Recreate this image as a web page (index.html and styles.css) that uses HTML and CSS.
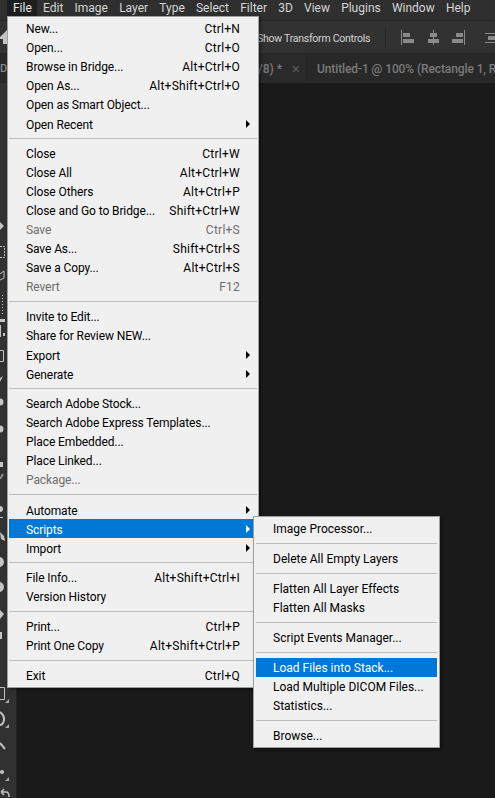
FILE: index.html
```html
<!DOCTYPE html>
<html lang="en">
<head>
    <meta charset="UTF-8">
    <meta name="viewport" content="width=device-width, initial-scale=1.0">
    <title>File menu</title>
    <link rel="stylesheet" href="styles.css">
</head>
<body>
    <div class="app">
        <div class="menubar">
            <span class="top-item top-active">File</span>
            <span class="top-item">Edit</span>
            <span class="top-item">Image</span>
            <span class="top-item">Layer</span>
            <span class="top-item">Type</span>
            <span class="top-item">Select</span>
            <span class="top-item">Filter</span>
            <span class="top-item">3D</span>
            <span class="top-item">View</span>
            <span class="top-item">Plugins</span>
            <span class="top-item">Window</span>
            <span class="top-item">Help</span>
        </div>
        <div class="optionsbar">
            <svg class="home-icon" width="8" height="16" viewBox="0 0 8 16">
                <path d="M0 8L7 1V15H3V10H0Z" fill="#c4c4c4"/>
            </svg>
            <span class="transform-label">Show Transform Controls</span>
            <span class="bar-divider"></span>
            <svg class="align-icons" width="94" height="15" viewBox="0 0 94 15">
                <g fill="#8a8a8a">
                    <rect x="0" y="0" width="1" height="15"/>
                    <rect x="2" y="3" width="7" height="4"/>
                    <rect x="2" y="9" width="11" height="4"/>
                    <rect x="32" y="0" width="1" height="15"/>
                    <rect x="29" y="3" width="7" height="4"/>
                    <rect x="27" y="9" width="11" height="4"/>
                    <rect x="63" y="0" width="1" height="15"/>
                    <rect x="55" y="3" width="7" height="4"/>
                    <rect x="51" y="9" width="11" height="4"/>
                    <rect x="84" y="3" width="10" height="1"/>
                    <rect x="84" y="12" width="10" height="1"/>
                    <rect x="87" y="6" width="7" height="4"/>
                </g>
            </svg>
        </div>
        <div class="tabbar">
            <span class="tab-stub">D</span>
            <span class="tab-first">/8) * <span class="tab-close">×</span></span>
            <span class="tab-second">Untitled-1 @ 100% (Rectangle 1, R</span>
        </div>
        <div class="workspace">
            <div class="toolbar">
                <svg width="16" height="714" viewBox="0 84 16 714">
                    <g fill="#c4c4c4">
                        <path d="M0 223L4 227L0 231Z"/>
                        <path d="M0 320H5V323H0Z"/>
                        <path d="M0 326H1V338H0ZM3 334H5V337H3Z"/>
                        <path d="M3 377L0 383L0 379Z"/>
                        <circle cx="0" cy="403" r="3.500"/>
                        <circle cx="0" cy="430" r="3.500"/>
                        <path d="M0 463H3V468H0Z"/>
                        <circle cx="0" cy="510" r="3"/>
                        <path d="M0 518H3V519H0Z"/>
                        <path d="M0 533L4 537L5 542L1 540Z"/>
                        <circle cx="-1" cy="563" r="5"/>
                        <circle cx="-1" cy="588" r="5"/>
                        <path d="M0 611L4 615L0 620Z"/>
                        <path d="M0 633H2V640H0Z"/>
                        <circle cx="2" cy="773" r="2"/>
                    </g>
                    <g fill="none" stroke="#c0c0c0">
                        <path d="M0 247.500H4.500V258.500H0" stroke-dasharray="2 1"/>
                        <path d="M0 281L4 279V272L0 275"/>
                        <path d="M2.500 296V317" stroke-dasharray="1 2"/>
                        <path d="M0 351.500H3.500V362.500H0"/>
                        <path d="M0 480L3 475" stroke="#8a8a8a" stroke-width="2"/>
                        <path d="M0 688.500H4.500V700.500H0"/>
                        <path d="M0 713C4 716 5 720 3 724C2 726 1 726 0 726" stroke-width="2"/>
                        <path d="M0 744L5 750" stroke-width="2"/>
                        <path d="M1 793L4 790M1 793L4 796M1 793H6C8 793 9 795 9 798" stroke-width="1.500"/>
                    </g>
                    <g fill="#a8a8a8">
                        <path d="M9 700V704H5Z"/>
                        <path d="M9 725V729H5Z"/>
                        <path d="M9 778V782H5Z"/>
                    </g>
                </svg>
            </div>
            <div class="canvas"></div>
        </div>

        <div class="menu file-menu">
            <div class="item"><span>New...</span><span class="keys">Ctrl+N</span></div>
            <div class="item"><span>Open...</span><span class="keys">Ctrl+O</span></div>
            <div class="item"><span>Browse in Bridge...</span><span class="keys">Alt+Ctrl+O</span></div>
            <div class="item"><span>Open As...</span><span class="keys">Alt+Shift+Ctrl+O</span></div>
            <div class="item"><span>Open as Smart Object...</span></div>
            <div class="item sub"><span>Open Recent</span></div>
            <div class="sep"></div>
            <div class="item"><span>Close</span><span class="keys">Ctrl+W</span></div>
            <div class="item"><span>Close All</span><span class="keys">Alt+Ctrl+W</span></div>
            <div class="item"><span>Close Others</span><span class="keys">Alt+Ctrl+P</span></div>
            <div class="item"><span>Close and Go to Bridge...</span><span class="keys">Shift+Ctrl+W</span></div>
            <div class="item off"><span>Save</span><span class="keys">Ctrl+S</span></div>
            <div class="item"><span>Save As...</span><span class="keys">Shift+Ctrl+S</span></div>
            <div class="item"><span>Save a Copy...</span><span class="keys">Alt+Ctrl+S</span></div>
            <div class="item off"><span>Revert</span><span class="keys">F12</span></div>
            <div class="sep"></div>
            <div class="item"><span>Invite to Edit...</span></div>
            <div class="item"><span>Share for Review NEW...</span></div>
            <div class="item sub"><span>Export</span></div>
            <div class="item sub"><span>Generate</span></div>
            <div class="sep"></div>
            <div class="item"><span>Search Adobe Stock...</span></div>
            <div class="item"><span>Search Adobe Express Templates...</span></div>
            <div class="item"><span>Place Embedded...</span></div>
            <div class="item"><span>Place Linked...</span></div>
            <div class="item off"><span>Package...</span></div>
            <div class="sep"></div>
            <div class="item sub"><span>Automate</span></div>
            <div class="item sub selected"><span>Scripts</span></div>
            <div class="item sub"><span>Import</span></div>
            <div class="sep"></div>
            <div class="item"><span>File Info...</span><span class="keys">Alt+Shift+Ctrl+I</span></div>
            <div class="item"><span>Version History</span></div>
            <div class="sep"></div>
            <div class="item"><span>Print...</span><span class="keys">Ctrl+P</span></div>
            <div class="item"><span>Print One Copy</span><span class="keys">Alt+Shift+Ctrl+P</span></div>
            <div class="sep"></div>
            <div class="item"><span>Exit</span><span class="keys">Ctrl+Q</span></div>
        </div>

        <div class="menu scripts-menu">
            <div class="item"><span>Image Processor...</span></div>
            <div class="sep"></div>
            <div class="item"><span>Delete All Empty Layers</span></div>
            <div class="sep"></div>
            <div class="item"><span>Flatten All Layer Effects</span></div>
            <div class="item"><span>Flatten All Masks</span></div>
            <div class="sep"></div>
            <div class="item"><span>Script Events Manager...</span></div>
            <div class="sep"></div>
            <div class="item selected"><span>Load Files into Stack...</span></div>
            <div class="item"><span>Load Multiple DICOM Files...</span></div>
            <div class="item"><span>Statistics...</span></div>
            <div class="sep"></div>
            <div class="item"><span>Browse...</span></div>
        </div>
    </div>
</body>
</html>
```
FILE: styles.css
```css
* {
    box-sizing: border-box;
}
html, body {
    margin: 0;
    height: 100%;
}
body {
    font-family: 'Roboto', 'Noto Sans', sans-serif;
    font-size: 12px;
    background-color: #1a1a1a;
    overflow: hidden;
}
.app {
    position: relative;
    display: flex;
    flex-direction: column;
    width: 495px;
    height: 798px;
    overflow: hidden;
}
.menubar {
    display: flex;
    height: 20px;
    padding: 0 0 3px 7.4px;
    background-color: #2f2f2f;
    color: #d6d6d6;
    flex-shrink: 0;
}
.top-item {
    padding: 0 5.6px;
    line-height: 17px;
    white-space: nowrap;
}
.top-active {
    background-color: #1e1e1e;
    color: #e8e8e8;
}
.optionsbar {
    display: flex;
    height: 34px;
    align-items: center;
    background-color: #323232;
    border-top: 1px solid #262626;
    border-bottom: 1px solid #262626;
    flex-shrink: 0;
    overflow: hidden;
}
.home-icon {
    flex-shrink: 0;
    margin-right: 249px;
}
.transform-label {
    margin-top: 2px;
    font-size: 10.5px;
    letter-spacing: -0.25px;
    color: #d4d4d4;
    white-space: nowrap;
    width: 128px;
    flex-shrink: 0;
}
.bar-divider {
    width: 1px;
    height: 22px;
    background-color: #282828;
    margin-right: 15px;
    flex-shrink: 0;
}
.align-icons {
    margin-top: 1px;
    flex-shrink: 0;
}
.tabbar {
    display: flex;
    height: 29px;
    align-items: center;
    background-color: #282828;
    color: #7a7a7a;
    font-weight: 500;
    white-space: nowrap;
    flex-shrink: 0;
    overflow: hidden;
}
.tab-stub {
    width: 8px;
    flex-shrink: 0;
    color: #8a8a8a;
    font-size: 11px;
}
.tab-first {
    width: 299px;
    height: 100%;
    padding-left: 250px;
    line-height: 29px;
    background-color: #2a2a2a;
    border-right: 1px solid #252525;
    flex-shrink: 0;
}
.tab-close {
    font-weight: 300;
    font-size: 15px;
    margin-left: 7px;
    color: #6c6c6c;
}
.tab-second {
    padding-left: 10px;
    letter-spacing: -0.1px;
}
.workspace {
    display: flex;
    flex: 1;
    min-height: 0;
}
.toolbar {
    width: 17px;
    background-color: #313131;
    border-right: 1px solid #232323;
    overflow: hidden;
}
.toolbar svg {
    display: block;
}
.canvas {
    flex: 1;
    background-color: #1a1a1a;
}

.menu {
    position: absolute;
    padding: 2px 1px;
    background-color: #f0f0f0;
    border: 1px solid #a0a0a0;
    box-shadow: 2px 2px 3px rgba(0, 0, 0, 0.4);
    color: #000;
}
.file-menu {
    left: 7px;
    top: 16px;
    width: 252px;
    height: 672px;
    letter-spacing: -0.1px;
}
.scripts-menu {
    left: 253px;
    top: 516px;
    width: 187px;
    height: 232px;
    padding: 2px;
}
.item {
    position: relative;
    display: flex;
    justify-content: space-between;
    height: 19px;
    padding: 0 17px;
    line-height: 21px;
    white-space: nowrap;
}
.item.sub {
    padding-top: 1px;
}
.keys {
    letter-spacing: 0.25px;
}
.item.off {
    color: #6d6d6d;
}
.item.selected {
    background-color: #0078d7;
    color: #fff;
}
.item.sub::after {
    content: "";
    position: absolute;
    right: 7px;
    top: 6px;
    border-left: 4px solid #000;
    border-top: 4px solid transparent;
    border-bottom: 4px solid transparent;
}
.item.sub.selected::after {
    border-left-color: #fff;
}
.sep {
    height: 1px;
    margin: 5px 0;
    background-color: #bdbdbd;
}
```
